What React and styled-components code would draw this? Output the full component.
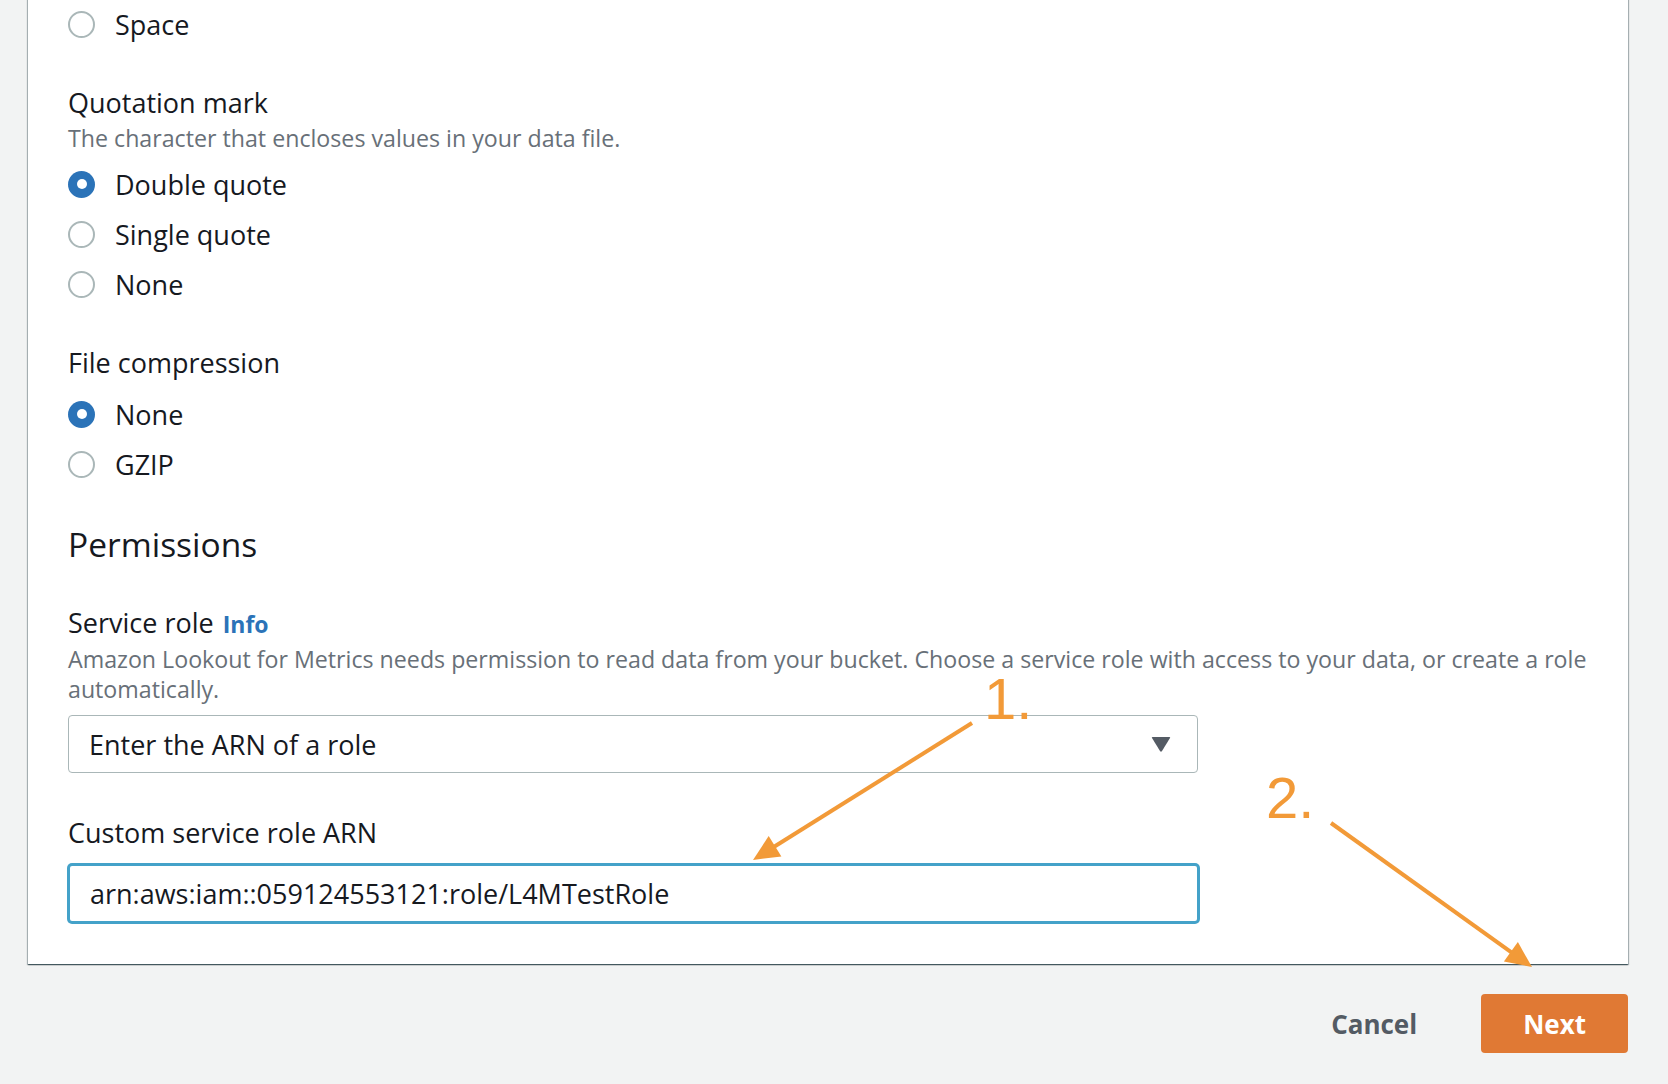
import React from "react";
import styled, { createGlobalStyle } from "styled-components";

const GlobalStyle = createGlobalStyle`
  html, body { margin: 0; padding: 0; background: #f2f3f3; }
  body { font-family: "Open Sans", "Noto Sans", sans-serif; color: #16191f; }
  * { box-sizing: border-box; }
`;

const Page = styled.div`
  position: relative;
  width: 1668px;
  height: 1084px;
  padding: 0 40px 0 28px;
  overflow: hidden;
`;

const Card = styled.div`
  margin-top: -1px;
  background: #ffffff;
  padding: 0 40px 41px 40px;
  box-shadow: 0 1px 1px 0 rgba(0, 28, 36, 0.5), 1px 1px 1px 0 rgba(0, 28, 36, 0.25),
    -1px 1px 1px 0 rgba(0, 28, 36, 0.25);
  display: flex;
  flex-direction: column;
`;

const Group = styled.div`
  display: flex;
  flex-direction: column;
  margin-top: ${(p) => p.$gap ?? 0}px;
`;

const Label = styled.div`
  font-size: 27px;
  line-height: 40px;
  color: #16191f;
`;

const InfoLink = styled.a`
  font-size: 23px;
  font-weight: 700;
  color: #2b73b8;
  text-decoration: none;
  margin-left: 2px;
`;

const Description = styled.div`
  margin-right: -12px;
  font-size: 23.2px;
  line-height: 30px;
  color: #687078;
`;

const Heading = styled.h2`
  margin: 0;
  font-size: 33.5px;
  font-weight: 400;
  line-height: 44px;
  color: #16191f;
`;

const RadioList = styled.div`
  display: flex;
  flex-direction: column;
  margin-top: ${(p) => p.$offset ?? 0}px;
`;

const RadioRow = styled.label`
  display: flex;
  align-items: center;
  gap: 20px;
  height: 50px;
  font-size: 27px;
  color: #16191f;
`;

const RadioCircle = styled.span`
  position: relative;
  flex: none;
  width: 27px;
  height: 27px;
  border-radius: 50%;
  background: ${(p) => (p.$checked ? "#2b73b8" : "#ffffff")};
  border: ${(p) => (p.$checked ? "none" : "2px solid #aab7b8")};
  &::after {
    content: "";
    display: ${(p) => (p.$checked ? "block" : "none")};
    position: absolute;
    left: 50%;
    top: 50%;
    width: 10px;
    height: 10px;
    margin: -5px 0 0 -5px;
    border-radius: 50%;
    background: #ffffff;
  }
`;

const Select = styled.div`
  margin-top: 11px;
  width: 1130px;
  height: 58px;
  border: 1px solid #aab7b8;
  border-radius: 4px;
  display: flex;
  align-items: center;
  justify-content: space-between;
  padding: 0 26px 0 20px;
  font-size: 27px;
  color: #16191f;
`;

const Input = styled.input`
  margin-top: 11px;
  width: 1131px;
  height: 59px;
  border: 2px solid #44a2c9;
  box-shadow: 0 0 0 1px #44a2c9;
  border-radius: 4px;
  padding: 0 19px 0 20px;
  font-family: "Open Sans", "Noto Sans", sans-serif;
  font-size: 27px;
  color: #16191f;
  outline: none;
  background: #ffffff;
`;

const Actions = styled.div`
  margin-top: 30px;
  display: flex;
  justify-content: flex-end;
  gap: 22px;
`;

const Button = styled.button`
  height: 59px;
  padding: 0 42px;
  border-radius: 4px;
  border: none;
  font-family: "Open Sans", "Noto Sans", sans-serif;
  font-size: 26px;
  font-weight: 700;
  cursor: pointer;
  background: ${(p) => (p.$primary ? "#e07934" : "transparent")};
  color: ${(p) => (p.$primary ? "#ffffff" : "#545b64")};
`;

const Callout = styled.div`
  position: absolute;
  left: ${(p) => p.$x}px;
  top: ${(p) => p.$y}px;
  font-family: "Liberation Sans", Arial, sans-serif;
  font-size: 58px;
  line-height: 58px;
  color: #f29a38;
  pointer-events: none;
`;

const Overlay = styled.svg`
  position: absolute;
  left: 0;
  top: 0;
  pointer-events: none;
`;

function Radio({ checked, children }) {
  return (
    <RadioRow>
      <RadioCircle $checked={checked} />
      <span>{children}</span>
    </RadioRow>
  );
}

function Arrow({ from, to, color = "#f29a38" }) {
  const dx = to[0] - from[0];
  const dy = to[1] - from[1];
  const len = Math.hypot(dx, dy);
  const ux = dx / len;
  const uy = dy / len;
  const headLen = 26;
  const half = 12;
  const bx = to[0] - headLen * ux;
  const by = to[1] - headLen * uy;
  const px = -uy;
  const py = ux;
  const pts = [
    [to[0], to[1]],
    [bx + half * px, by + half * py],
    [bx - half * px, by - half * py],
  ]
    .map((p) => p.join(","))
    .join(" ");
  return (
    <g>
      <line x1={from[0]} y1={from[1]} x2={bx + ux * 2} y2={by + uy * 2} stroke={color} strokeWidth="4" />
      <polygon points={pts} fill={color} />
    </g>
  );
}

export default function App() {
  return (
    <>
      <GlobalStyle />
      <Page>
        <Card>
          <RadioList>
            <Radio>Space</Radio>
          </RadioList>

          <Group $gap={34}>
            <Label>Quotation mark</Label>
            <Description>The character that encloses values in your data file.</Description>
            <RadioList $offset={6}>
              <Radio checked>Double quote</Radio>
              <Radio>Single quote</Radio>
              <Radio>None</Radio>
            </RadioList>
          </Group>

          <Group $gap={34}>
            <Label>File compression</Label>
            <RadioList $offset={6}>
              <Radio checked>None</Radio>
              <Radio>GZIP</Radio>
            </RadioList>
          </Group>

          <Group $gap={33}>
            <Heading>Permissions</Heading>
          </Group>

          <Group $gap={37}>
            <Label>
              Service role <InfoLink href="#">Info</InfoLink>
            </Label>
            <Description>
              Amazon Lookout for Metrics needs permission to read data from your bucket. Choose a service role with
              access to your data, or create a role automatically.
            </Description>
            <Select>
              <span>Enter the ARN of a role</span>
              <svg width="20" height="16" viewBox="0 0 20 16">
                <path d="M1.5 1 H18.5 Q19.6 1 19 2 L11 15 Q10 16.3 9 15 L1 2 Q0.4 1 1.5 1 Z" fill="#545b64" />
              </svg>
            </Select>
          </Group>

          <Group $gap={40}>
            <Label>Custom service role ARN</Label>
            <Input readOnly value="arn:aws:iam::059124553121:role/L4MTestRole" />
          </Group>
        </Card>

        <Actions>
          <Button>Cancel</Button>
          <Button $primary>Next</Button>
        </Actions>

        <Callout $x={984} $y={670}>1.</Callout>
        <Callout $x={1266} $y={769}>2.</Callout>

        <Overlay width="1668" height="1084" viewBox="0 0 1668 1084">
          <Arrow from={[972, 723]} to={[753, 860]} />
          <Arrow from={[1331, 823]} to={[1532, 967]} />
        </Overlay>
      </Page>
    </>
  );
}
